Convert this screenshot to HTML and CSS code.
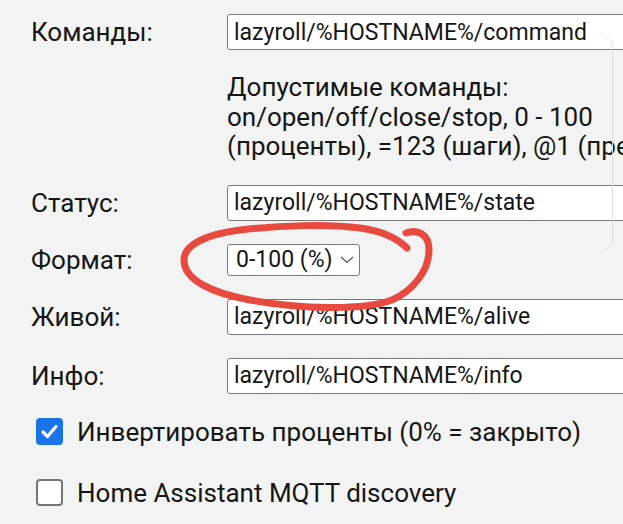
FILE: index.html
```html
<!DOCTYPE html>
<html lang="ru">
<head>
<meta charset="utf-8">
<link rel="stylesheet" href="styles.css">
</head>
<body>
<div class="form">
  <div class="row first">
    <label class="label">Команды:</label>
    <input class="field" type="text" value="lazyroll/%HOSTNAME%/command">
  </div>
  <div class="row help-row">
    <span class="label"></span>
    <p class="help">Допустимые команды:<br>on/open/off/close/stop, 0 - 100<br>(проценты), =123 (шаги), @1 (предустановка)</p>
  </div>
  <div class="row">
    <label class="label">Статус:</label>
    <input class="field" type="text" value="lazyroll/%HOSTNAME%/state">
  </div>
  <div class="row">
    <label class="label">Формат:</label>
    <div class="select">
      <span class="select-text">0-100 (%)</span>
      <svg class="chev" width="14" height="8" viewBox="0 0 14 8"><path d="M1 1 L7 6.5 L13 1" fill="none" stroke="#555" stroke-width="1.2"/></svg>
    </div>
  </div>
  <div class="row">
    <label class="label">Живой:</label>
    <input class="field" type="text" value="lazyroll/%HOSTNAME%/alive">
  </div>
  <div class="row">
    <label class="label">Инфо:</label>
    <input class="field" type="text" value="lazyroll/%HOSTNAME%/info">
  </div>
  <div class="check-row first-check">
    <span class="box checked"><svg width="27" height="27" viewBox="0 0 27 27"><path d="M7 14 L11.5 18.5 L20 8.5" fill="none" stroke="#fff" stroke-width="3.2" stroke-linecap="round" stroke-linejoin="round"/></svg></span>
    <span class="check-text">Инвертировать проценты (0% = закрыто)</span>
  </div>
  <div class="check-row">
    <span class="box"></span>
    <span class="check-text">Home Assistant MQTT discovery</span>
  </div>
</div>
<div class="edge-panel"></div>
<svg class="scribble" width="623" height="524" viewBox="0 0 623 524">
  <path d="M406 233 C418 229 429 234 429 250 C429 270 414 290 392 300 C362 311 300 309 250 300 C212 293 184 280 184 260 C184 244 208 234 240 230 C280 225 330 224 360 228 C382 231 397 238 407 248" fill="none" stroke="#e84a40" stroke-width="7" stroke-linecap="round"/>
</svg>
</body>
</html>
```

FILE: styles.css
```css
html, body {
  margin: 0;
  padding: 0;
  background: #f2f4f3;
  overflow: hidden;
  width: 623px;
  height: 524px;
}
body {
  position: relative;
  font-family: Roboto, "Noto Sans", sans-serif;
  font-size: 26px;
  color: #161616;
}
.form {
  padding: 14px 0 0 31px;
  display: flex;
  flex-direction: column;
}
.row {
  display: grid;
  grid-template-columns: 196px 1fr;
  align-items: center;
  margin-top: 23px;
}
.row.first { margin-top: 0; }
.row.help-row { margin-top: 23px; margin-bottom: 0; }
.label {
  white-space: nowrap;
}
.field {
  width: 430px;
  height: 36px;
  box-sizing: border-box;
  border: 1px solid #7a7a7a;
  border-radius: 3px;
  background: #fff;
  font-family: Roboto, sans-serif;
  font-size: 23px;
  color: #161616;
  padding: 0 6px;
  margin: 0;
}
.help {
  margin: 0;
  line-height: 29.5px;
  white-space: nowrap;
}
.select {
  width: 133px;
  height: 32px;
  box-sizing: border-box;
  border: 1px solid #7a7a7a;
  border-radius: 3px;
  background: #fff;
  display: flex;
  align-items: center;
  padding: 0 6px 0 8px;
  gap: 7px;
  font-size: 23px;
  white-space: nowrap;
}
.select-text { white-space: nowrap; }
.chev { margin-top: 1px; flex: none; }
.check-row {
  display: flex;
  align-items: center;
  gap: 14px;
  margin-left: 5px;
  margin-top: 31px;
}
.check-row.first-check { margin-top: 23px; }
.box {
  width: 27px;
  height: 27px;
  box-sizing: border-box;
  border: 2px solid #767676;
  border-radius: 4px;
  background: #fff;
  flex: none;
  display: block;
}
.box.checked {
  background: #1a73e8;
  border-color: #1a73e8;
  position: relative;
}
.box.checked svg {
  position: absolute;
  left: -2px;
  top: -2px;
}
.check-text { white-space: nowrap; }
.edge-panel {
  position: absolute;
  left: 560px;
  top: 33px;
  width: 52px;
  height: 220px;
  border-right: 1px solid #dcdede;
  border-radius: 0 16px 16px 0;
  pointer-events: none;
}
.scribble {
  position: absolute;
  left: 0;
  top: 0;
  pointer-events: none;
}
```
